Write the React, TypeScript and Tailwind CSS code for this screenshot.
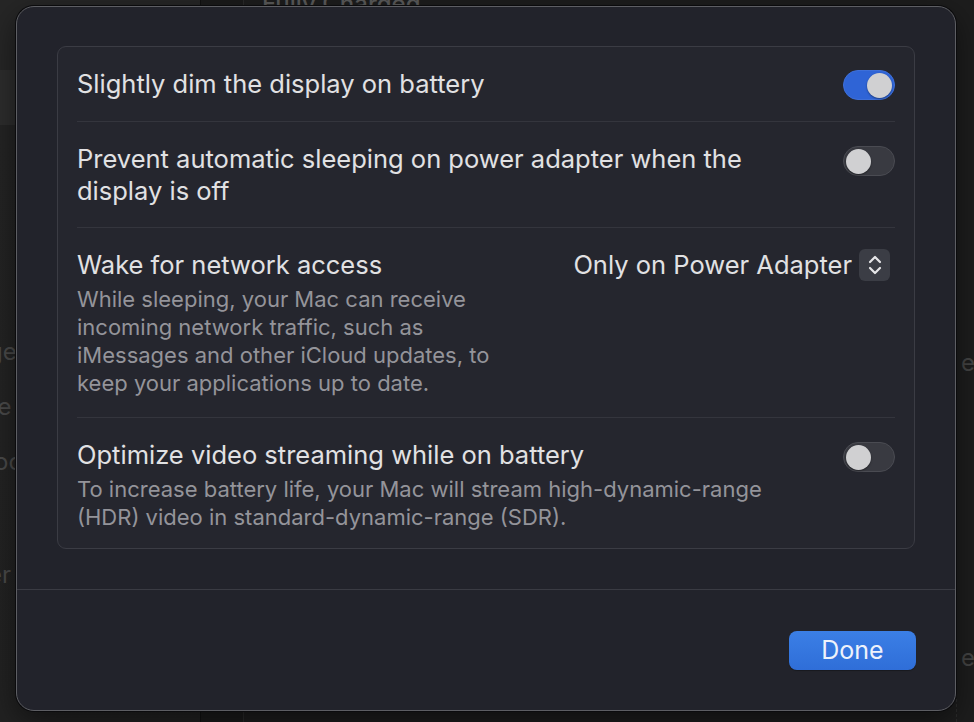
import React from 'react';

const Toggle: React.FC<{ on?: boolean }> = ({ on }) => (
  <div
    className={
      on
        ? 'mt-[2px] flex h-[30px] w-[52px] shrink-0 items-center justify-end rounded-full border border-[#3e6fd8] bg-[#2f64d6] px-[2px]'
        : 'mt-[3px] flex h-[30px] w-[52px] shrink-0 items-center justify-start rounded-full border border-[#4a4b52] bg-[#393a41] px-[2px]'
    }
  >
    <div className="h-[25px] w-[25px] rounded-full bg-[#d0d0d2] shadow-[0_1px_2px_rgba(0,0,0,0.4)]" />
  </div>
);

const Stepper: React.FC = () => (
  <div className="flex h-[32px] w-[31px] items-center justify-center rounded-[6px] bg-[#3b3d45]">
    <svg width="16" height="24" viewBox="0 0 16 24" fill="none">
      <path d="M3 9 L8 4 L13 9" stroke="#e6e6e8" strokeWidth="2.2" strokeLinecap="round" strokeLinejoin="round" />
      <path d="M3 15 L8 20 L13 15" stroke="#e6e6e8" strokeWidth="2.2" strokeLinecap="round" strokeLinejoin="round" />
    </svg>
  </div>
);

export default function App() {
  return (
    <div className="relative h-[722px] w-[974px] overflow-hidden bg-[#1e1e1e] font-[Inter]">
      {/* window behind the sheet */}
      <div className="flex h-full">
        <div className="flex w-[200px] flex-col bg-[#262626]">
          <div className="h-[70px]" />
          <div className="h-[55px] bg-[#2d2d2d]" />
          <div className="flex flex-1 flex-col bg-gradient-to-b from-[#242424] to-[#222222] pt-[209px] text-[24px] text-[#4a4a4a]">
            <div className="h-[55px] -ml-[12px]">ge</div>
            <div className="h-[55px] -ml-[10px]">te</div>
            <div className="h-[113px] -ml-[6px]">oc</div>
            <div className="-ml-[12px]">er</div>
          </div>
        </div>
        <div className="w-[43px] border-l border-[#111] bg-[#1b1b1b]" />
        <div className="flex flex-1 flex-col border-l border-[#2a2a2a] bg-[#1d1d1d]">
          <div className="-mt-[14px] pl-[18px] text-[24px] font-medium text-[#5a5a5a]">Fully Charged</div>
          <div className="flex flex-1 justify-end">
            <div className="flex w-[18px] flex-col border-l border-dashed border-[#2c2c2c] pt-[325px] text-[24px] leading-[32px] text-[#444]">
              <div className="h-[295px] pl-[4px]">e</div>
              <div className="pl-[4px]">e</div>
            </div>
          </div>
        </div>
      </div>

      {/* sheet */}
      <div className="absolute left-[16px] top-[6px] flex h-[705px] w-[940px] flex-col rounded-[18px] border border-[#5d5e63] bg-[#22232b] shadow-[0_0_0_1px_#0b0b0d,0_10px_30px_rgba(0,0,0,0.5)]">
        <div className="px-[40px] pt-[39px] pb-[40px]">
          <div className="rounded-[9px] border border-[#3b3c44] bg-[#25262e] px-[19px]">
            {/* row 1 */}
            <div className="flex items-start justify-between border-b border-[#34353d] py-[21px]">
              <div className="text-[25.5px] leading-[32px] text-[#e1e1e3]">Slightly dim the display on battery</div>
              <Toggle on />
            </div>
            {/* row 2 */}
            <div className="flex items-start justify-between border-b border-[#34353d] pt-[21px] pb-[20px]">
              <div className="w-[700px] text-[25.5px] leading-[32px] text-[#e1e1e3]">
                Prevent automatic sleeping on power adapter when the display is off
              </div>
              <Toggle />
            </div>
            {/* row 3 */}
            <div className="flex items-start justify-between border-b border-[#34353d] pt-[21px] pb-[20px]">
              <div className="flex flex-col gap-[4px]">
                <div className="text-[25.5px] leading-[32px] text-[#e1e1e3]">Wake for network access</div>
                <div className="w-[440px] text-[22px] leading-[28px] text-[#94949a]">
                  While sleeping, your Mac can receive incoming network traffic, such as iMessages and other iCloud updates, to keep your applications up to date.
                </div>
              </div>
              <div className="mr-[5px] flex items-center gap-[7px]">
                <span className="text-[25.5px] leading-[32px] text-[#e1e1e3]">Only on Power Adapter</span>
                <Stepper />
              </div>
            </div>
            {/* row 4 */}
            <div className="flex items-start justify-between pt-[21px] pb-[17px]">
              <div className="flex flex-col gap-[4px]">
                <div className="text-[25.5px] leading-[32px] text-[#e1e1e3]">Optimize video streaming while on battery</div>
                <div className="w-[710px] text-[22px] leading-[28px] text-[#94949a]">
                  To increase battery life, your Mac will stream high-dynamic-range (HDR) video in standard-dynamic-range (SDR).
                </div>
              </div>
              <Toggle />
            </div>
          </div>
        </div>
        <div className="border-t border-[#3a3b43]" />
        <div className="flex flex-1 items-start justify-end px-[39px] pt-[41px]">
          <button className="flex h-[39px] w-[127px] items-center justify-center rounded-[8px] bg-gradient-to-b from-[#3b7fe6] to-[#2f6ed8] text-[25px] text-[#eef2fb] shadow-[0_1px_1px_rgba(0,0,0,0.3)]">
            Done
          </button>
        </div>
      </div>
    </div>
  );
}
